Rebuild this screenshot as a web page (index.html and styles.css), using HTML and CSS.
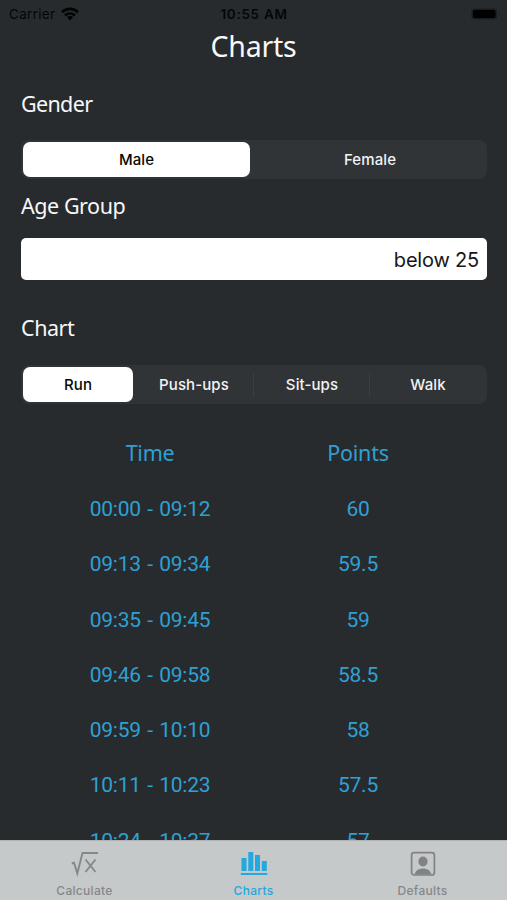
FILE: index.html
```html
<!DOCTYPE html>
<html lang="en">
<head>
<meta charset="utf-8">
<title>Charts</title>
<link rel="stylesheet" href="styles.css">
</head>
<body>
<div class="app">
  <header class="status">
    <div class="carrier"><span>Carrier</span>
      <svg width="18" height="14" viewBox="0 0 18 14" fill="none" stroke="#020303" stroke-width="2.7"><path d="M1 5.2C5.5.7 12.5.7 17 5.2M4 8.5c2.9-2.7 7.1-2.7 10 0"/><path d="M5.9 10.3c1.8-1.6 4.4-1.6 6.2 0L9 13.5z" fill="#020303" stroke="none"/></svg>
    </div>
    <div class="clock">10:55 AM</div>
    <div class="battery"><svg width="28" height="12" viewBox="0 0 28 12"><rect x=".5" y=".5" width="25.500" height="11" rx="3" fill="#1a1d1f"/><rect x="2" y="2" width="22.500" height="8" rx="2" fill="#000"/><path d="M27 4q2 2 0 4z" fill="#1a1d1f"/></svg></div>
  </header>
  <h1 class="title">Charts</h1>
  <main class="content">
    <h2 class="label gender">Gender</h2>
    <div class="segments two">
      <button class="segment selected">Male</button>
      <button class="segment female">Female</button>
    </div>
    <h2 class="label age">Age Group</h2>
    <div class="field">below 25</div>
    <h2 class="label chart">Chart</h2>
    <div class="segments four">
      <button class="segment selected">Run</button>
      <button class="segment">Push-ups</button>
      <button class="segment divided">Sit-ups</button>
      <button class="segment divided">Walk</button>
    </div>
    <div class="table">
      <div class="row head"><span>Time</span><span>Points</span></div>
      <div class="row"><span>00:00 - 09:12</span><span>60</span></div>
      <div class="row"><span>09:13 - 09:34</span><span>59.5</span></div>
      <div class="row"><span>09:35 - 09:45</span><span>59</span></div>
      <div class="row"><span>09:46 - 09:58</span><span>58.5</span></div>
      <div class="row"><span>09:59 - 10:10</span><span>58</span></div>
      <div class="row"><span>10:11 - 10:23</span><span>57.5</span></div>
      <div class="row"><span>10:24 - 10:37</span><span>57</span></div>
    </div>
  </main>
  <nav class="tabs">
    <a class="tab"><svg width="28" height="26" viewBox="0 0 28 26" fill="none" stroke="#858789" stroke-width="1.900"><path d="M.8 12.500l2.200-.8 3.300 10.700L11.500 2H27M14.500 8.500l10 12.500M24.500 8.500l-10 12.500"/></svg><span>Calculate</span></a>
    <a class="tab active"><svg width="28" height="26" viewBox="0 0 28 26" fill="#23a8e0"><path d="M1.500 7h5v13h-5zM8.300 1h5v19h-5zM15 4h5v16h-5zM21.800 10h5v10h-5zM.8 22h26.500v2H.8z"/></svg><span>Charts</span></a>
    <a class="tab"><svg width="28" height="26" viewBox="0 0 28 26"><rect x="2.600" y="1.700" width="22.800" height="22.300" rx="2.500" fill="none" stroke="#808284" stroke-width="1.700"/><ellipse cx="14" cy="10.500" rx="4.600" ry="5" fill="#808284"/><path d="M5.500 23.500c1-4 4.500-6 8.500-6s7.500 2 8.500 6z" fill="#808284"/></svg><span>Defaults</span></a>
  </nav>
</div>
</body>
</html>
```
FILE: styles.css
```css
* { box-sizing: border-box; }
body { margin: 0; background: #272b2e; }
.app {
  width: 507px; height: 900px; overflow: hidden;
  display: flex; flex-direction: column;
  background: #272b2e; color: #f7f8f8;
  font-family: Inter, sans-serif;
}
.status {
  height: 27px; padding: 0 8px 0 9px; flex: none;
  display: grid; grid-template-columns: 1fr auto 1fr; align-items: center;
  font-size: 13.500px; color: #050607;
}
.carrier { display: flex; align-items: center; gap: 6px; letter-spacing: .3px; }
.clock { font-weight: 600; letter-spacing: .7px; }
.battery { display: flex; justify-content: flex-end; }
.title {
  margin: 0; height: 38px; flex: none; text-align: center;
  font: 400 28.500px/38px "Noto Sans", sans-serif; letter-spacing: -.2px;
}
.content { flex: 1; min-height: 0; overflow: hidden; padding: 0 20px 0 21px; }
.label {
  margin: 0; height: 30px;
  font: 400 21.500px/30px "Noto Sans", sans-serif; letter-spacing: -.45px;
}
.gender { margin-top: 24px; letter-spacing: -.65px; }
.age { margin-top: 12px; }
.chart { margin-top: 33px; }
.segments {
  display: grid; height: 39px; padding: 2px; border-radius: 8px;
  background: #303437;
}
.two { grid-template-columns: 227px 1fr; margin-top: 21px; }
.four { grid-template-columns: 110px 120px 116px 1fr; margin-top: 22px; }
.segment {
  border: 0; padding: 0; background: none; color: #f2f3f3;
  font: 500 15px/20px Inter, sans-serif; letter-spacing: .1px;
}
.four .segment + .segment { padding-left: 2px; }
.female { padding-left: 5px; }
.selected { background: #fff; color: #080808; border-radius: 7px; }
.divided { background: linear-gradient(#3a3e41, #3a3e41) left center / 1px 24px no-repeat; }
.field {
  height: 42px; margin-top: 17px; padding-right: 8px;
  border-radius: 5px; background: #fff; color: #171717;
  text-align: right; font: 400 20px/45px Inter, sans-serif; letter-spacing: -.2px;
}
.table { margin-top: 21px; color: #2fa0d3; font: 400 21px/58px Roboto, sans-serif; }
.row {
  display: grid; grid-template-columns: 208px 208px; justify-content: center;
  height: 55.300px; text-align: center; letter-spacing: -.25px; word-spacing: 1.500px;
}
.head { height: 55px; font: 400 21.500px/55px "Noto Sans", sans-serif; }
.tabs {
  height: 60px; flex: none; display: grid; grid-template-columns: repeat(3, 1fr);
  background: #c6c9ca; border-top: 1px solid #b1b4b5;
}
.tab {
  display: flex; flex-direction: column; align-items: center; padding-top: 10px;
  color: #858789; font: 500 12px/16px Inter, sans-serif; letter-spacing: .3px;
}
.tab svg { display: block; margin-bottom: 6px; }
.active { color: #23a8e0; }
```
